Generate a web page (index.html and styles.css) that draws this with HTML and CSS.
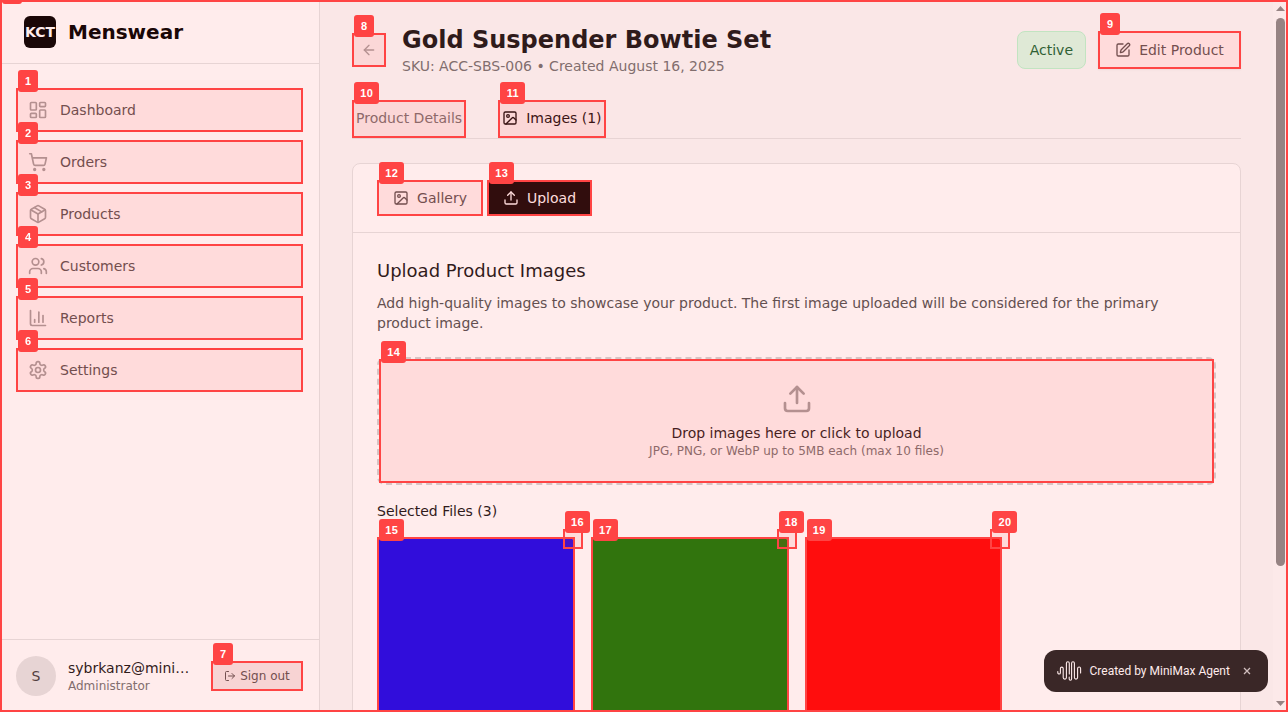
FILE: index.html
```html
<!DOCTYPE html>
<html lang="en">
<head>
<meta charset="utf-8">
<title>KCT Menswear</title>
<link rel="stylesheet" href="styles.css">
</head>
<body>
<svg class="defs" width="0" height="0" aria-hidden="true">
  <symbol id="i-image" viewBox="0 0 24 24"><rect width="18" height="18" x="3" y="3" rx="2"/><circle cx="9" cy="9" r="2"/><path d="m21 15-3.086-3.086a2 2 0 0 0-2.828 0L6 21"/></symbol>
  <symbol id="i-upload" viewBox="0 0 24 24"><path d="M21 15v4a2 2 0 0 1-2 2H5a2 2 0 0 1-2-2v-4"/><path d="M17 8l-5-5-5 5"/><path d="M12 3v12"/></symbol>
</svg>
<div class="app">
  <aside class="sidebar">
    <div class="brand"><span class="logo">KCT</span><span class="brand-name">Menswear</span></div>
    <nav class="nav">
      <a class="nav-item"><svg class="icon i20" viewBox="0 0 24 24"><rect width="7" height="9" x="3" y="3" rx="1"/><rect width="7" height="5" x="14" y="3" rx="1"/><rect width="7" height="9" x="14" y="12" rx="1"/><rect width="7" height="5" x="3" y="16" rx="1"/></svg>Dashboard<span class="mark"><b>1</b></span></a>
      <a class="nav-item"><svg class="icon i20" viewBox="0 0 24 24"><circle cx="8" cy="21" r="1"/><circle cx="19" cy="21" r="1"/><path d="M2.05 2.05h2l2.66 12.42a2 2 0 0 0 2 1.58h9.78a2 2 0 0 0 1.95-1.57l1.65-7.43H5.12"/></svg>Orders<span class="mark"><b>2</b></span></a>
      <a class="nav-item"><svg class="icon i20" viewBox="0 0 24 24"><path d="m7.5 4.27 9 5.15"/><path d="M21 8a2 2 0 0 0-1-1.73l-7-4a2 2 0 0 0-2 0l-7 4A2 2 0 0 0 3 8v8a2 2 0 0 0 1 1.73l7 4a2 2 0 0 0 2 0l7-4A2 2 0 0 0 21 16Z"/><path d="m3.3 7 8.7 5 8.7-5"/><path d="M12 22V12"/></svg>Products<span class="mark"><b>3</b></span></a>
      <a class="nav-item"><svg class="icon i20" viewBox="0 0 24 24"><path d="M16 21v-2a4 4 0 0 0-4-4H6a4 4 0 0 0-4 4v2"/><circle cx="9" cy="7" r="4"/><path d="M22 21v-2a4 4 0 0 0-3-3.87"/><path d="M16 3.13a4 4 0 0 1 0 7.75"/></svg>Customers<span class="mark"><b>4</b></span></a>
      <a class="nav-item"><svg class="icon i20" viewBox="0 0 24 24"><path d="M3 3v16a2 2 0 0 0 2 2h16"/><path d="M18 17V9"/><path d="M13 17V5"/><path d="M8 17v-3"/></svg>Reports<span class="mark"><b>5</b></span></a>
      <a class="nav-item"><svg class="icon i20" viewBox="0 0 24 24"><path d="M12.22 2h-.44a2 2 0 0 0-2 2v.18a2 2 0 0 1-1 1.73l-.43.25a2 2 0 0 1-2 0l-.15-.08a2 2 0 0 0-2.73.73l-.22.38a2 2 0 0 0 .73 2.73l.15.1a2 2 0 0 1 1 1.72v.51a2 2 0 0 1-1 1.74l-.15.09a2 2 0 0 0-.73 2.73l.22.38a2 2 0 0 0 2.73.73l.15-.08a2 2 0 0 1 2 0l.43.25a2 2 0 0 1 1 1.73V20a2 2 0 0 0 2 2h.44a2 2 0 0 0 2-2v-.18a2 2 0 0 1 1-1.73l.43-.25a2 2 0 0 1 2 0l.15.08a2 2 0 0 0 2.73-.73l.22-.39a2 2 0 0 0-.73-2.73l-.15-.08a2 2 0 0 1-1-1.74v-.5a2 2 0 0 1 1-1.74l.15-.09a2 2 0 0 0 .73-2.73l-.22-.38a2 2 0 0 0-2.73-.73l-.15.08a2 2 0 0 1-2 0l-.43-.25a2 2 0 0 1-1-1.73V4a2 2 0 0 0-2-2z"/><circle cx="12" cy="12" r="3"/></svg>Settings<span class="mark"><b>6</b></span></a>
    </nav>
    <div class="account">
      <span class="avatar">S</span>
      <div class="who"><div class="email">sybrkanz@mini…</div><div class="role">Administrator</div></div>
      <button class="signout"><svg class="icon i12" viewBox="0 0 24 24"><path d="M9 21H5a2 2 0 0 1-2-2V5a2 2 0 0 1 2-2h4"/><path d="m16 17 5-5-5-5"/><path d="M21 12H9"/></svg>Sign out<span class="mark"><b>7</b></span></button>
    </div>
  </aside>
  <main class="main">
    <header class="head">
      <button class="back"><svg class="icon i16" viewBox="0 0 24 24"><path d="m12 19-7-7 7-7"/><path d="M19 12H5"/></svg><span class="mark"><b>8</b></span></button>
      <div class="titles"><h1>Gold Suspender Bowtie Set</h1><p>SKU: ACC-SBS-006 • Created August 16, 2025</p></div>
      <span class="status">Active</span>
      <button class="edit"><svg class="icon i16" viewBox="0 0 24 24"><path d="M12 3H5a2 2 0 0 0-2 2v14a2 2 0 0 0 2 2h14a2 2 0 0 0 2-2v-7"/><path d="M18.375 2.625a1 1 0 0 1 3 3l-9.013 9.014a2 2 0 0 1-.853.505l-2.873.84a.5.5 0 0 1-.62-.62l.84-2.873a2 2 0 0 1 .506-.852z"/></svg>Edit Product<span class="mark"><b>9</b></span></button>
    </header>
    <nav class="tabs">
      <a class="tab">Product Details<span class="mark wide"><b>10</b></span></a>
      <a class="tab active"><svg class="icon i16"><use href="#i-image"/></svg>Images (1)<span class="mark wide"><b>11</b></span></a>
    </nav>
    <section class="card">
      <div class="card-head">
        <button class="pill gallery"><svg class="icon i16"><use href="#i-image"/></svg>Gallery<span class="mark wide"><b>12</b></span></button>
        <button class="pill upload"><svg class="icon i16"><use href="#i-upload"/></svg>Upload<span class="mark wide"><b>13</b></span></button>
      </div>
      <div class="card-body">
        <h2>Upload Product Images</h2>
        <p class="desc">Add high-quality images to showcase your product. The first image uploaded will be considered for the primary product image.</p>
        <div class="drop">
          <svg class="icon i32"><use href="#i-upload"/></svg>
          <div class="drop-title">Drop images here or click to upload</div>
          <div class="drop-hint">JPG, PNG, or WebP up to 5MB each (max 10 files)</div>
          <span class="mark wide"><b>14</b></span>
        </div>
        <h3>Selected Files (3)</h3>
        <div class="files">
          <div class="file blue"><span class="mark wide"><b>15</b></span><span class="remove"><span class="mark wide"><b>16</b></span></span></div>
          <div class="file green"><span class="mark wide"><b>17</b></span><span class="remove"><span class="mark wide"><b>18</b></span></span></div>
          <div class="file red"><span class="mark wide"><b>19</b></span><span class="remove"><span class="mark wide"><b>20</b></span></span></div>
        </div>
      </div>
    </section>
  </main>
  <div class="scrollbar"><i class="up"></i><i class="thumb"></i><i class="down"></i></div>
</div>
<div class="toast">
  <svg class="wave" viewBox="0 0 25 22"><path d="M.8 11.500v1.200a1.300 1.300 0 0 0 2.600 0V8.500a1.400 1.400 0 0 1 2.800 0v9a1.600 1.600 0 0 0 3.200 0V3.200a1.450 1.450 0 0 1 2.900 0V14"/><path d="M12.200 17v2a1.200 1.200 0 0 0 2.400 0V3.200a1.400 1.400 0 0 1 2.800 0v14.300a1.600 1.600 0 0 0 3.200 0V8.500a1.500 1.500 0 0 1 3 0V13"/></svg>
  <span>Created by MiniMax Agent</span>
  <svg class="close" viewBox="0 0 8 8"><path d="M1 1l6 6M7 1L1 7"/></svg>
</div>
<div class="mark page"><b></b></div>
</body>
</html>
```
FILE: styles.css
```css
* { box-sizing: border-box; margin: 0; padding: 0; }
body { height: 712px; overflow: hidden; background: #fafafa; color: #171717; font: 14px/20px "DejaVu Sans", sans-serif; }
button { font: inherit; border: 0; background: none; }
.defs { position: absolute; }
.icon { flex: none; fill: none; stroke: currentColor; stroke-width: 2; stroke-linecap: round; stroke-linejoin: round; }
.i12 { width: 12px; height: 12px; }
.i16 { width: 16px; height: 16px; }
.i20 { width: 20px; height: 20px; }
.i32 { width: 32px; height: 32px; }
.app { display: flex; height: 712px; overflow: hidden; }

/* Numbered element markers */
.mark { position: absolute; inset: 0; z-index: 20; border: 2px solid #f44; background: rgba(255, 68, 68, .1); }
.mark b { position: absolute; left: 0; top: -20px; width: 20px; height: 22px; border-radius: 3px; background: #f44; color: #fff; font: bold 11px/23px "Liberation Sans", sans-serif; letter-spacing: .4px; text-indent: .4px; text-align: center; }
.mark.wide b { width: 25px; }
.mark.page { z-index: 10; }
.mark.page b { top: -2px; height: 4px; border-radius: 0 0 3px 3px; }

.sidebar { flex: none; width: 320px; display: flex; flex-direction: column; background: #fff; border-right: 1px solid #e5e5e5; }
.brand { flex: none; height: 64px; padding: 0 24px; display: flex; align-items: center; gap: 12px; border-bottom: 1px solid #e5e5e5; color: #000; }
.logo { width: 32px; height: 32px; border-radius: 6px; background: #000; color: #fff; font-size: 14px; line-height: 32px; font-weight: bold; display: flex; justify-content: center; }
.brand-name { font-size: 20px; line-height: 28px; font-weight: bold; }
.nav { flex: 1; padding: 24px 16px; display: flex; flex-direction: column; gap: 8px; }
.nav-item { position: relative; height: 44px; padding: 0 12px; display: flex; align-items: center; gap: 12px; color: #525252; }
.nav-item .icon { color: #a3a3a3; }
.account { height: 73px; padding: 0 16px; border-top: 1px solid #e5e5e5; display: flex; align-items: center; }
.avatar { flex: none; width: 40px; height: 40px; border-radius: 50%; background: #e5e5e5; color: #404040; line-height: 40px; text-align: center; margin-right: 12px; }
.who { width: 122px; margin-right: 21px; }
.email { line-height: 20px; white-space: nowrap; }
.role { font-size: 12px; line-height: 16px; color: #737373; }
.signout { position: relative; width: 92px; height: 30px; display: flex; align-items: center; justify-content: center; gap: 4px; border-radius: 4px; background: #f5f5f5; color: #525252; font-size: 12px; white-space: nowrap; }

.main { flex: 1; padding: 24px 32px 0; min-width: 0; }
.head { display: flex; align-items: center; height: 52px; }
.back { position: relative; width: 34px; height: 34px; display: grid; place-items: center; color: #a3a3a3; margin-right: 16px; }
.titles { flex: 1; }
h1 { font-size: 24px; line-height: 32px; font-weight: bold; }
.titles p { color: #737373; }
.status { height: 38px; padding: 0 12px; border: 1px solid #bbf7d0; border-radius: 8px; background: #dcfce7; color: #166534; line-height: 36px; margin-right: 12px; }
.edit { position: relative; width: 143px; height: 38px; display: flex; align-items: center; justify-content: center; gap: 8px; background: #fff; color: #525252; box-shadow: 0 1px 2px rgba(0, 0, 0, .06); }
.tabs { margin-top: 24px; height: 39px; display: flex; gap: 32px; border-bottom: 1px solid #e5e5e5; }
.tab { position: relative; height: 38px; padding: 8px 4px 10px; display: flex; align-items: center; gap: 8px; color: #737373; }
.tab.active { color: #0a0a0a; }
.card { margin-top: 24px; height: 700px; background: #fff; border: 1px solid #e5e5e5; border-radius: 8px; }
.card-head { padding: 16px 24px; display: flex; gap: 4px; border-bottom: 1px solid #e5e5e5; }
.pill { position: relative; height: 36px; width: 106px; display: flex; align-items: center; justify-content: center; gap: 8px; color: #525252; }
.pill.upload { width: 105px; background: #000; color: #fff; }
.card-body { padding: 24px; }
h2 { font-size: 18px; line-height: 28px; font-weight: normal; margin-bottom: 8px; }
.desc { color: #525252; margin-bottom: 24px; }
.drop { position: relative; height: 128px; padding-top: 24px; border: 2px dashed #d4d4d4; border-radius: 8px; display: flex; flex-direction: column; align-items: center; }
.drop .icon { color: #a3a3a3; margin-bottom: 8px; }
.drop-hint { font-size: 12px; line-height: 16px; color: #737373; }
h3 { font-size: 14px; line-height: 20px; font-weight: normal; margin: 16px 0; }
.files { display: grid; grid-template-columns: repeat(4, 1fr); gap: 16px; }
.file { position: relative; height: 198px; border-radius: 8px; }
.blue { background: #00f; }
.green { background: #008000; }
.red { background: #f00; }
.remove { position: absolute; top: -8px; right: -8px; width: 20px; height: 20px; }

.scrollbar { flex: none; width: 15px; background: #fcfcfc; padding: 6px 0 6px 3px; display: flex; flex-direction: column; }
.scrollbar i { width: 9px; background: #8b8b8b; }
.up { height: 5px; clip-path: polygon(50% 0, 100% 100%, 0 100%); }
.thumb { height: 548px; margin-top: 7px; border-radius: 5px; }
.down { height: 5px; margin-top: auto; clip-path: polygon(0 0, 100% 0, 50% 100%); }
.toast { position: fixed; left: 1044px; top: 650px; width: 224px; height: 42px; border-radius: 12px; background: #242424; color: #fff; display: flex; align-items: center; padding-left: 13px; font: 12px/16px Roboto, sans-serif; white-space: nowrap; }
.toast span { width: 141px; margin-left: 7.5px; margin-right: 12.5px; }
.wave { flex: none; width: 25px; height: 22px; fill: none; stroke: #fff; stroke-width: 1.1; stroke-linecap: round; }
.close { width: 8px; height: 8px; fill: none; stroke: #ccc; stroke-width: 1.3; }
```
